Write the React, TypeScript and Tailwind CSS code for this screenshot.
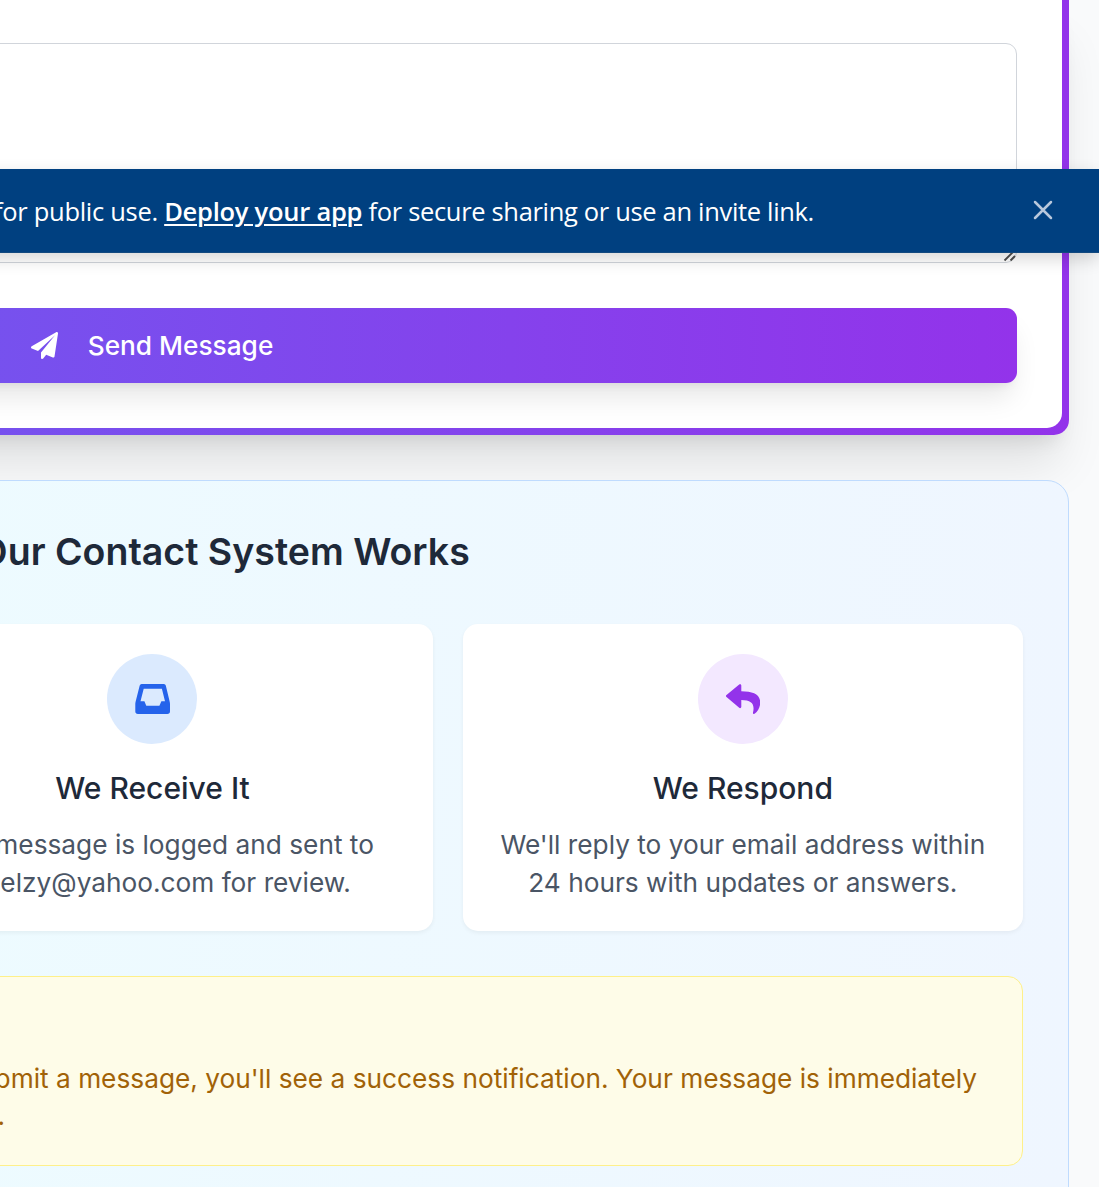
import type { ReactNode } from "react";
import { FaPaperPlane, FaInfoCircle } from "react-icons/fa";

function Banner() {
  return (
    <div className="absolute top-[169px] right-0 -left-10 flex h-[84px] items-center justify-between border-b border-[#12497f] bg-[#004080] pr-[45px] pl-[34px] shadow-[0_6px_16px_rgba(0,0,0,0.16)]">
      <p className="font-['Open_Sans',sans-serif] text-[25.5px] leading-[36px] tracking-[-0.3px] whitespace-nowrap text-white">
        <span>for public use. </span>
        <a className="font-semibold tracking-[-0.25px] underline decoration-2 underline-offset-[3px]">Deploy your app</a>
        <span className="tracking-[-0.33px]"> for secure sharing or use an invite link.</span>
      </p>
      <svg className="mb-[2px] size-[22px]" viewBox="0 0 22 22" fill="none" stroke="#b8c8dc" strokeWidth="2.5" strokeLinecap="round">
        <path d="M3 3l16 16M19 3L3 19" />
      </svg>
    </div>
  );
}

function SendIcon() {
  return (
    <svg className="mr-[30px] size-[27px]" viewBox="0 0 27 27">
      <path
        fill="#fff"
        d="M25.1.2L.7 14.2C-.3 14.8-.2 16 .8 16.5L7 19.1L24 3.2L10 20.4V25.7C10 27 11.5 27.4 12.2 26.5L15.2 22.8L21.8 25.5C22.6 25.8 23.4 25.4 23.5 24.5L27 1.5C27.2.4 26.1-.4 25.1.2Z"
      />
    </svg>
  );
}

function InboxIcon() {
  return (
    <svg className="h-[30px] w-[35px]" viewBox="0 0 35 30" fill="#2563eb" fillRule="evenodd">
      <path d="M6.6 0H28.9Q30.4 0 30.8 1.5L34.7 17.8Q35 19 35 20.2V27.3Q35 30 32.3 30H3Q.3 30 .3 27.3V20.2Q.3 19 .6 17.8L4.7 1.5Q5.1 0 6.6 0ZM8.7 4.7L5.5 17.2H9.4L11.3 21.8H24.4L26.4 17.2H30L26.9 4.7Z" />
    </svg>
  );
}

function ReplyIcon() {
  return (
    <svg className="h-[30px] w-[34px]" viewBox="0 0 34 30" fill="#9333ea">
      <path d="M13.2.5C14-.2 15.3.2 15.3 1.5V7.3C27 7.4 34.2 10.3 34.2 18.6C34.2 23.2 31.8 27.2 28.9 29.6C28 30.3 26.7 29.8 27 28.6C28.9 20.6 26.2 16.2 15.3 16.1V22.8C15.3 24.1 14 24.5 13.2 23.8L.5 13.1C-.2 12.5-.2 11.7.5 11.1Z" />
    </svg>
  );
}

function ContactForm() {
  return (
    <div className="h-[435px] rounded-b-[15px] bg-linear-to-r/srgb from-[#6366f1] to-[#9333ea] px-[7px] pb-[7px] shadow-[0_37.5px_47px_-9px_rgba(0,0,0,0.1),0_15px_19px_-11px_rgba(0,0,0,0.1)]">
      <div className="h-[428px] rounded-b-[15px] bg-white px-[45px] pt-[43px]">
        <div className="relative">
          <textarea className="block h-[220px] w-full resize-none rounded-[11px] border border-[#d1d5db] bg-white" />
          <svg className="absolute right-0 bottom-0 size-[15px]" viewBox="0 0 15 15" fill="none">
            <path d="M0 0H15V15H0Z" fill="#fff" />
            <path d="M14.5 0V3.5A11 11 0 0 1 4 14.5H0" stroke="#d1d5db" />
            <path d="M2.5 12.5L13 2M8.5 12.5L13 8" stroke="#4b4b4b" strokeWidth="1.8" />
          </svg>
        </div>
        <button className="mt-[45px] flex h-[75px] w-full items-center justify-center rounded-[11px] bg-linear-to-r/srgb from-[#6366f1] to-[#9333ea] pr-px text-[26.25px] font-medium text-white shadow-[0_18.75px_28px_-5.6px_rgba(0,0,0,0.1),0_7.5px_11px_-7.5px_rgba(0,0,0,0.1)]">
          <SendIcon />
          Send Message
        </button>
      </div>
    </div>
  );
}

function Step({ icon, tint, title, lines }: { icon: ReactNode; tint: string; title: string; lines: string[] }) {
  return (
    <div className="flex h-[307px] flex-1 flex-col items-center rounded-[15px] bg-white pt-[30px] text-center shadow-[0_2px_4px_rgba(0,0,0,0.05)]">
      <div className={`flex size-[90px] items-center justify-center rounded-full ${tint}`}>{icon}</div>
      <h3 className="mt-[22px] text-[30px] leading-[45px] font-medium text-gray-800">{title}</h3>
      <p className="mt-[15px] text-[26.25px] leading-[38px] whitespace-nowrap text-gray-600">
        {lines[0]}
        <br />
        {lines[1]}
      </p>
    </div>
  );
}

function HowItWorks() {
  return (
    <section className="mt-[45px] h-[780px] rounded-[22px] border border-[#bfdbfe] bg-linear-to-r/srgb from-[#ecfeff] to-[#eff6ff] px-[45px] pt-[45px]">
      <h2 className="flex items-center justify-center text-[37.5px] leading-[52.5px] font-semibold text-gray-800">
        <FaInfoCircle className="mr-[15px] size-[37.5px] text-[#2563eb]" />
        How Our Contact System Works
      </h2>
      <div className="mt-[45px] flex gap-[30px]">
        <Step
          icon={<FaPaperPlane className="size-[34px] text-cyan-600" />}
          tint="bg-cyan-100"
          title="You Submit"
          lines={["Fill out the form with your", "question or feedback."]}
        />
        <Step
          icon={<InboxIcon />}
          tint="bg-[#dbeafe]"
          title="We Receive It"
          lines={["Your message is logged and sent to", "andelzy@yahoo.com for review."]}
        />
        <Step
          icon={<ReplyIcon />}
          tint="bg-[#f3e8ff]"
          title="We Respond"
          lines={["We'll reply to your email address within", "24 hours with updates or answers."]}
        />
      </div>
      <div className="mt-[45px] h-[190px] rounded-[15px] border border-[#fef08a] bg-[#fefce8] pt-[83px] pr-[45px]">
        <p className="text-right text-[26.25px] leading-[37.5px] whitespace-nowrap text-[#a16207]">
          When you submit a message, you'll see a success notification. Your message is immediately
        </p>
        <p className="flex w-[722px] justify-end text-[26.25px] leading-[37.5px] whitespace-nowrap text-[#a16207]">
          delivered.
        </p>
      </div>
    </section>
  );
}

export default function App() {
  return (
    <main className="relative h-[1187px] w-[1099px] overflow-hidden bg-[#f9fafb] font-[Inter,sans-serif]">
      <div className="ml-[-764px] w-[1833px]">
        <ContactForm />
        <HowItWorks />
      </div>
      <Banner />
    </main>
  );
}
